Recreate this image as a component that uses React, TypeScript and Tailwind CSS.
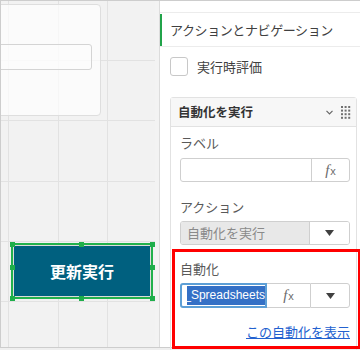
import React from "react";

const jp = "font-['Noto_Sans_CJK_JP','Noto_Sans',sans-serif]";

function Fx() {
  return (
    <span className="flex items-baseline text-[#6b6b6b]">
      <span className="font-['Liberation_Serif',serif] italic text-[15px] leading-none">f</span>
      <span className="font-['Liberation_Sans',sans-serif] text-[11px] leading-none ml-[1px]">x</span>
    </span>
  );
}

function Caret() {
  return (
    <svg width="9" height="6" viewBox="0 0 9 6">
      <path d="M0 0h9L4.5 6z" fill="#404040" />
    </svg>
  );
}

function Grip() {
  const dots = [];
  for (let r = 0; r < 4; r++) {
    for (let c = 0; c < 3; c++) {
      dots.push(<rect key={`${r}-${c}`} x={c * 3.6} y={r * 3.6} width="2" height="2" fill="#707070" />);
    }
  }
  return (
    <svg width="10" height="13" viewBox="0 0 10 13">
      {dots}
    </svg>
  );
}

function Handle({ className }: { className: string }) {
  return <div className={`absolute w-[5px] h-[5px] bg-[#1fae4b] ${className}`} />;
}

export default function App() {
  return (
    <div className={`w-[360px] h-[350px] overflow-hidden bg-[#efefef] ${jp}`}>
      <div className="relative flex h-[348px] border-t border-l border-b border-[#cdcdcd]">
        {/* design canvas */}
        <div className="relative w-[154px] h-full bg-[#f2f2f2] overflow-hidden">
          <svg className="absolute inset-0" width="154" height="346">
            {[7, 57, 106].map((x) => (
              <line key={x} x1={x + 0.5} y1="0" x2={x + 0.5} y2="346" stroke="#e2e2e2" />
            ))}
            {[59, 119, 180, 240, 300].map((y) => (
              <line key={y} x1="0" y1={y + 0.5} x2="154" y2={y + 0.5} stroke="#e2e2e2" />
            ))}
          </svg>

          <div className="absolute left-[-4px] top-[3px] w-[104px] h-[112px] rounded-[4px] border border-[#dedede] bg-white/70" />
          <div className="absolute left-[-4px] top-[43px] w-[95px] h-[26px] rounded-[3px] border-[1.5px] border-[#d4d4d4] bg-white/40" />

          <div className="absolute left-[10px] top-[242px] w-[142px] h-[56px] border-2 border-[#22b14c] bg-[#dcdcdc] p-px">
            <div className="flex h-full items-center justify-center bg-[#00607f] text-white text-[16px] font-bold">
              更新実行
            </div>
            <Handle className="left-[-3.5px] top-[-3.5px]" />
            <Handle className="left-[66px] top-[-3.5px]" />
            <Handle className="right-[-3.5px] top-[-3.5px]" />
            <Handle className="left-[-3.5px] top-[20px]" />
            <Handle className="right-[-3.5px] top-[20px]" />
            <Handle className="left-[-3.5px] bottom-[-3.5px]" />
            <Handle className="left-[66px] bottom-[-3.5px]" />
            <Handle className="right-[-3.5px] bottom-[-3.5px]" />
          </div>
        </div>

        <div className="w-[5px] h-full bg-[#f3f3f3] border-r border-[#dcdcdc]" />

        {/* properties panel */}
        <div className="flex-1 h-full bg-white">
          <div className="mt-[11px] h-[35px] border-t border-b border-[#ececec] flex items-center">
            <div className="w-[2px] h-[32px] bg-[#21a34a]" />
            <span className="ml-[8px] text-[13px] tracking-[-0.4px] text-[#404040]">アクションとナビゲーション</span>
          </div>

          <div className="mt-[10px] ml-[10px] flex items-center h-[19px]">
            <div className="w-[18px] h-[19px] rounded-[3px] border border-[#c8c8c8] bg-white" />
            <span className="ml-[9px] text-[13px] text-[#404040]">実行時評価</span>
          </div>

          <div className="mt-[21px] ml-[10px] w-[187px] h-[260px] border border-[#e2e2e2] rounded-t-[3px]">
            <div className="h-[29px] bg-[#f7f7f7] border-b border-[#e2e2e2] flex items-center pl-[7px] pr-[5px]">
              <span className="text-[12.5px] font-bold text-[#333333]">自動化を実行</span>
              <svg className="ml-auto" width="7" height="5" viewBox="0 0 7 5">
                <path d="M0.5 0.8L3.5 3.8L6.5 0.8" fill="none" stroke="#666" strokeWidth="1.2" />
              </svg>
              <div className="ml-[8px]">
                <Grip />
              </div>
            </div>

            <div className="pl-[9px] pt-[6px]">
              <div className="h-[20px] leading-[20px] text-[13px] text-[#595959]">ラベル</div>
              <div className="mt-[5px] w-[170px] h-[24px] flex rounded-[3px] border border-[#cfcfcf] bg-white">
                <div className="flex-1" />
                <div className="w-[38px] border-l border-[#cfcfcf] flex items-center justify-center">
                  <Fx />
                </div>
              </div>

              <div className="mt-[15px] h-[20px] leading-[20px] text-[13px] text-[#595959]">アクション</div>
              <div className="mt-[4px] w-[170px] h-[24px] flex rounded-[3px] border border-[#cfcfcf] overflow-hidden">
                <div className="flex-1 bg-[#e8e8e8] flex items-center pl-[6px] text-[13px] text-[#8a8a8a]">
                  自動化を実行
                </div>
                <div className="w-[40px] bg-white border-l border-[#cfcfcf] flex items-center justify-center">
                  <Caret />
                </div>
              </div>

              <div className="mt-[14px] h-[20px] leading-[20px] text-[13px] text-[#595959]">自動化</div>
              <div className="mt-[4px] w-[170px] h-[25px] flex">
                <div className="w-[87px] h-full rounded-l-[3px] border-2 border-[#5d9fd6] bg-white pl-[5px] flex items-center overflow-hidden">
                  <div className="flex-1 flex justify-end overflow-hidden">
                    <span className="shrink-0 bg-[#3470c6] text-white text-[12px] leading-[19px] font-['Liberation_Sans',sans-serif]">
                      _Spreadsheets
                    </span>
                  </div>
                </div>
                <div className="w-[43px] h-full border-y border-[#cfcfcf] flex items-center justify-center">
                  <Fx />
                </div>
                <div className="w-[40px] h-full border border-[#cfcfcf] rounded-r-[3px] flex items-center justify-center">
                  <Caret />
                </div>
              </div>

              <div className="mt-[12px] w-[170px] text-right h-[20px] leading-[20px]">
                <span className="text-[13px] text-[#2361cf] underline">この自動化を表示</span>
              </div>
            </div>
          </div>
        </div>

        {/* annotation */}
        <div className="absolute left-[171px] top-[248px] w-[189px] h-[100px] border-[3px] border-[#ff0000]" />
      </div>
    </div>
  );
}
